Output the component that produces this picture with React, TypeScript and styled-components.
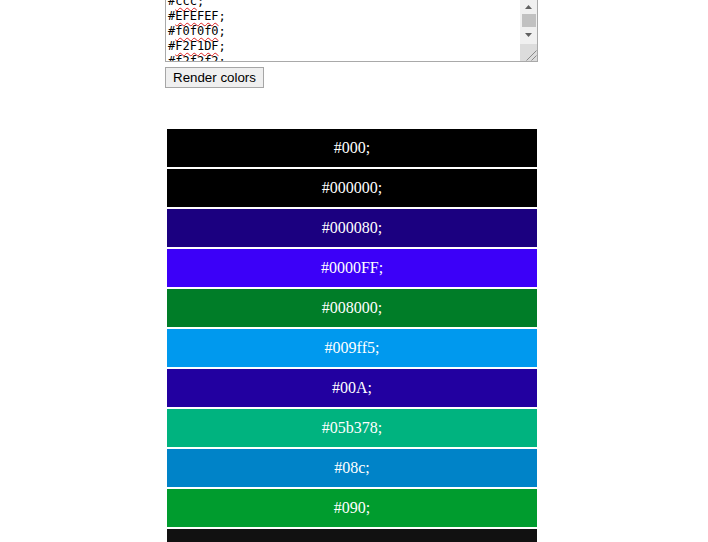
import React, { useLayoutEffect, useRef } from "react";
import styled, { createGlobalStyle } from "styled-components";

const GlobalStyle = createGlobalStyle`
  html, body { margin: 0; padding: 0; background: #ffffff; }
  body { overflow: hidden; }
`;

const colors: { name: string; bg: string }[] = [
  { name: "#000;", bg: "#000000" },
  { name: "#000000;", bg: "#000000" },
  { name: "#000080;", bg: "#1b0080" },
  { name: "#0000FF;", bg: "#3c00f8" },
  { name: "#008000;", bg: "#007d28" },
  { name: "#009ff5;", bg: "#0099ee" },
  { name: "#00A;", bg: "#2200a0" },
  { name: "#05b378;", bg: "#00b37f" },
  { name: "#08c;", bg: "#0083c8" },
  { name: "#090;", bg: "#009c2e" },
  { name: "#111;", bg: "#111111" },
  { name: "#333;", bg: "#333333" },
  { name: "#666;", bg: "#666666" },
];

const textLines = [
  "#000;",
  "#000000;",
  "#000080;",
  "#0000FF;",
  "#ccc;",
  "#EFEFEF;",
  "#f0f0f0;",
  "#F2F1DF;",
  "#f2f2f2;",
  "#fff;",
];

const Page = styled.div`
  display: flex;
  flex-direction: column;
  align-items: flex-start;
  margin-top: -5px;
  padding-left: 165px;
`;

const TextBox = styled.div`
  box-sizing: border-box;
  width: 373px;
  height: 67px;
  border: 1px solid #a9a9a9;
  display: flex;
  background: #ffffff;
`;

const TextContent = styled.div`
  flex: 1;
  overflow: hidden;
  padding: 2px 2px 0 2px;
  font-family: "DejaVu Sans Mono", monospace;
  font-size: 12px;
  line-height: 15px;
  color: #000000;
`;

const Line = styled.div`
  white-space: pre;
`;

const Misspelled = styled.span`
  text-decoration: underline wavy #e02020;
  text-decoration-thickness: 1px;
  text-underline-offset: 2px;
  text-decoration-skip-ink: none;
`;

const Scrollbar = styled.div`
  width: 17px;
  display: flex;
  flex-direction: column;
  background: #f0f0f0;
`;

const ArrowButton = styled.div<{ $h: number; $dir: "up" | "down" }>`
  height: ${(p) => p.$h}px;
  display: flex;
  justify-content: center;
  align-items: center;
  box-sizing: border-box;
  padding-top: ${(p) => (p.$dir === "up" ? 3 : 0)}px;
  padding-bottom: ${(p) => (p.$dir === "down" ? 2 : 0)}px;
`;

const Track = styled.div`
  height: 13px;
  display: flex;
  padding: 0 1px 0 2px;
`;

const Thumb = styled.div`
  flex: 1;
  background: #c1c1c1;
`;

const Grip = styled.div`
  height: 17px;
  background: #dcdcdc;
  display: flex;
  align-items: flex-end;
  justify-content: flex-end;
`;

const RenderButton = styled.button`
  margin-top: 5px;
  height: 21px;
  padding: 0 7px;
  font-family: "Liberation Sans", Arial, sans-serif;
  font-size: 13.333px;
  line-height: 19px;
  color: #000000;
  background: #efefef;
  border: 1px solid #a6a6a6;
  border-radius: 0;
`;

const Swatches = styled.div`
  margin-top: 41px;
  margin-left: 2px;
  width: 370px;
  display: flex;
  flex-direction: column;
  gap: 2px;
`;

const Swatch = styled.div<{ $bg: string }>`
  height: 38px;
  background: ${(p) => p.$bg};
  color: #ffffff;
  font-family: "Liberation Serif", "Times New Roman", serif;
  font-size: 16px;
  line-height: 38px;
  text-align: center;
`;

function renderLine(text: string, misspelled: boolean) {
  if (!misspelled) return text;
  const body = text.slice(1, -1);
  return (
    <>
      #<Misspelled>{body}</Misspelled>;
    </>
  );
}

const spelled = new Set(["#ccc;", "#EFEFEF;", "#f0f0f0;", "#F2F1DF;", "#f2f2f2;"]);

export default function App() {
  const ref = useRef<HTMLDivElement>(null);
  useLayoutEffect(() => {
    const idx = textLines.indexOf("#ccc;");
    if (ref.current) ref.current.scrollTop = idx * 15 + 6 - 2;
  }, []);

  return (
    <>
      <GlobalStyle />
      <Page>
        <TextBox>
          <TextContent ref={ref}>
            {textLines.map((l, i) => (
              <Line key={i}>{renderLine(l, spelled.has(l))}</Line>
            ))}
          </TextContent>
          <Scrollbar>
            <ArrowButton $h={18} $dir="up">
              <svg width="7" height="4" viewBox="0 0 7 4">
                <polygon points="3.5,0 7,4 0,4" fill="#606060" />
              </svg>
            </ArrowButton>
            <Track>
              <Thumb />
            </Track>
            <ArrowButton $h={17} $dir="down">
              <svg width="7" height="4" viewBox="0 0 7 4">
                <polygon points="0,0 7,0 3.5,4" fill="#606060" />
              </svg>
            </ArrowButton>
            <Grip>
              <svg width="17" height="17" viewBox="0 0 17 17">
                <line x1="6.5" y1="16.5" x2="16.5" y2="6.5" stroke="#8a8a8a" strokeWidth="1" />
                <line x1="11.5" y1="16.5" x2="16.5" y2="11.5" stroke="#8a8a8a" strokeWidth="1" />
              </svg>
            </Grip>
          </Scrollbar>
        </TextBox>
        <RenderButton type="button">Render colors</RenderButton>
        <Swatches>
          {colors.map((c, i) => (
            <Swatch key={i} $bg={c.bg}>
              {c.name}
            </Swatch>
          ))}
        </Swatches>
      </Page>
    </>
  );
}
